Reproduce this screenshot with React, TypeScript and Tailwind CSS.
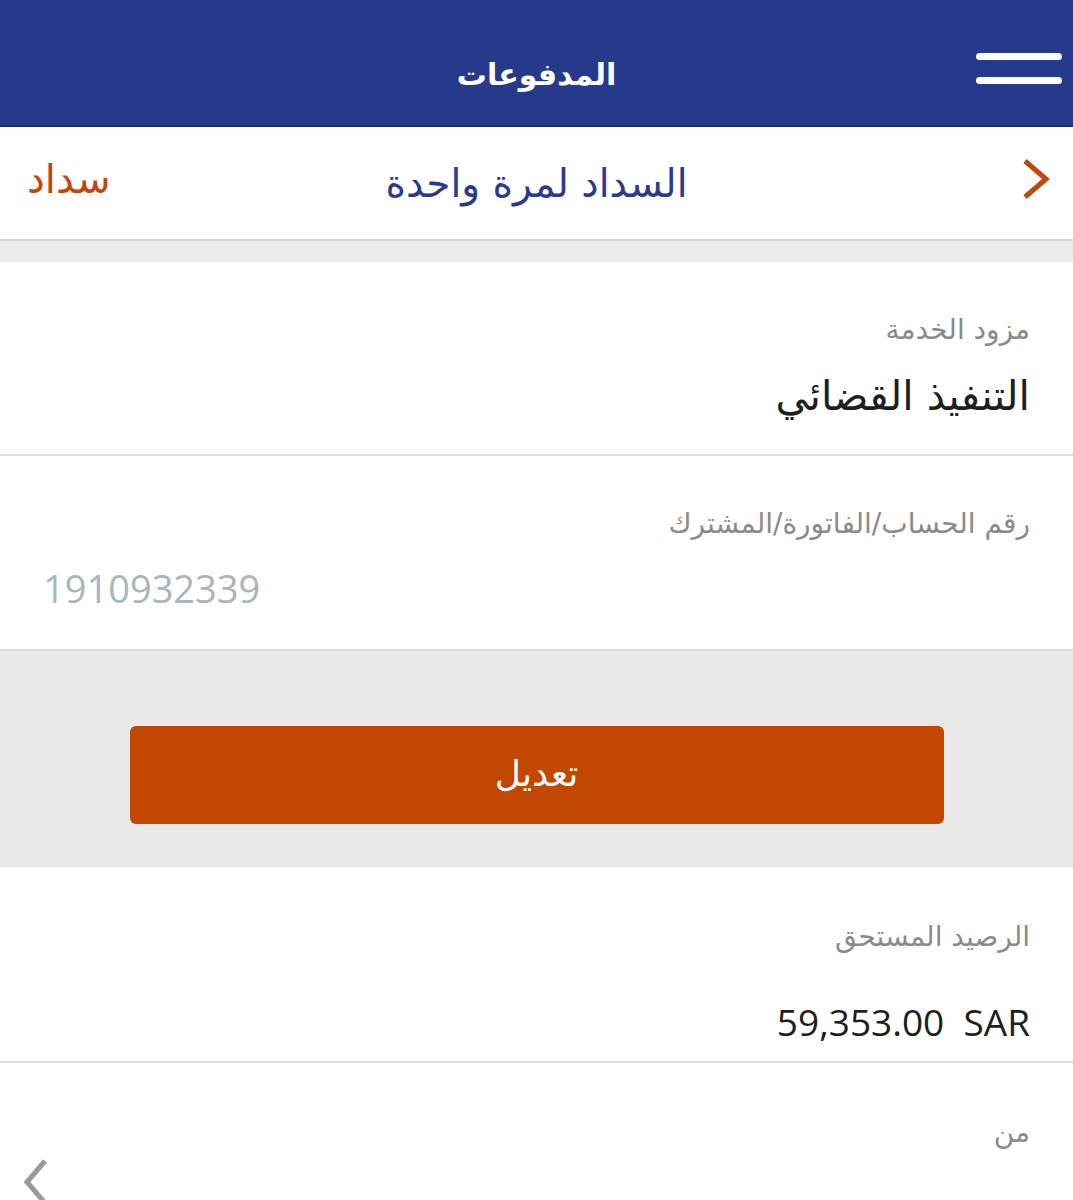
import React from "react";

const ar = { fontFamily: '"DejaVu Sans", "Noto Sans", sans-serif' };
const num = { fontFamily: '"Open Sans", "DejaVu Sans", sans-serif' };

export default function App() {
  return (
    <div dir="rtl" className="w-[1073px] h-[1200px] overflow-hidden bg-white" style={ar}>
      {/* Header */}
      <div className="relative h-[127px] bg-[#253a8a] border-b-2 border-[#1b2b6e] flex items-center justify-center">
        <div className="text-white text-[30px] font-bold leading-none mt-[24px]">المدفوعات</div>
        <div className="absolute right-[11px] top-[53px] flex flex-col gap-[17px]">
          <div className="w-[86px] h-[7px] rounded-full bg-white" />
          <div className="w-[86px] h-[7px] rounded-full bg-white" />
        </div>
      </div>

      {/* Sub header */}
      <div className="relative h-[114px] bg-white border-b-2 border-[#d6d6d6] flex items-center justify-between px-[22px]">
        <svg width="30" height="42" viewBox="0 0 30 42" className="mt-[-8px]">
          <path d="M4 3 L25 21 L4 39" fill="none" stroke="#c2470e" strokeWidth="5" strokeLinejoin="miter" />
        </svg>
        <div className="absolute inset-x-0 top-[37px] text-center text-[#2a3b8f] text-[39px] leading-none">
          السداد لمرة واحدة
        </div>
        <div className="text-[#c2470e] text-[40px] leading-none mt-[-8px] ml-[5px]">سداد</div>
      </div>

      {/* grey band */}
      <div className="h-[21px] bg-[#ebebeb]" />

      {/* Service provider */}
      <div className="h-[194px] border-b-2 border-[#dcdcdc] px-[43px] pt-[54px]">
        <div className="text-[#8a8a8a] text-[28px] leading-none">مزود الخدمة</div>
        <div className="text-[#1e1e1e] text-[41px] leading-none mt-[32px]">التنفيذ القضائي</div>
      </div>

      {/* Account number */}
      <div className="h-[195px] border-b-2 border-[#dcdcdc] px-[43px] pt-[54px]">
        <div className="text-[#8a8a8a] text-[28px] leading-none">رقم الحساب/الفاتورة/المشترك</div>
        <div dir="ltr" className="text-[#a9b6bd] text-[38px] leading-none mt-[31px] text-left" style={num}>
          1910932339
        </div>
      </div>

      {/* Grey area with button */}
      <div className="h-[216px] bg-[#e9e9ea] flex justify-center pt-[75px]">
        <div className="w-[814px] h-[98px] rounded-[6px] bg-[#c24700] flex items-center justify-center">
          <span className="text-white text-[36px] leading-none mt-[-2px]">تعديل</span>
        </div>
      </div>

      {/* Balance */}
      <div className="h-[196px] border-b-2 border-[#dcdcdc] px-[43px] pt-[56px]">
        <div className="text-[#8a8a8a] text-[28px] leading-none">الرصيد المستحق</div>
        <div dir="ltr" className="text-[#1e1e1e] text-[37px] leading-none mt-[52px] text-right" style={num}>
          59,353.00&nbsp;&nbsp;SAR
        </div>
      </div>

      {/* From */}
      <div className="relative px-[43px] pt-[56px] h-[200px]">
        <div className="text-[#8a8a8a] text-[28px] leading-none">من</div>
        <svg width="30" height="46" viewBox="0 0 30 46" className="absolute left-[20px] top-[95px]">
          <path d="M25 3 L7 24 L25 45" fill="none" stroke="#9a9a9a" strokeWidth="5" />
        </svg>
      </div>
    </div>
  );
}
